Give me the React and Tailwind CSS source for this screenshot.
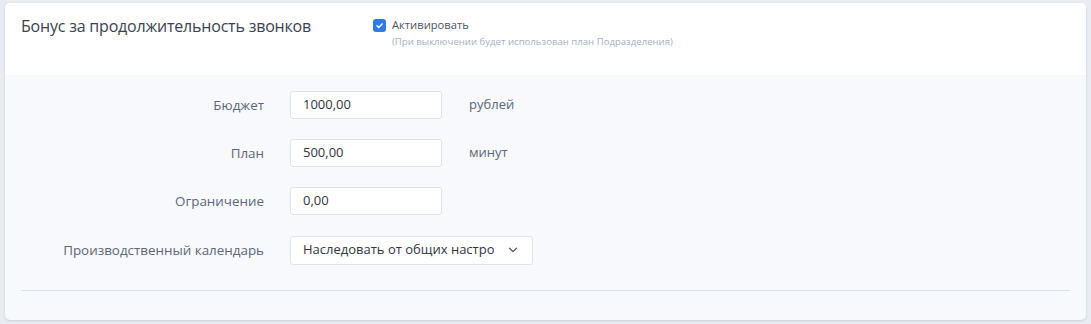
import React from "react";

function Row({ label, children, suffix }) {
  return (
    <div className="flex items-center h-[28px]">
      <div className="w-[243px] text-right text-[13.4px] text-[#5c6778] whitespace-nowrap">{label}</div>
      <div className="ml-[26px]">{children}</div>
      {suffix && <div className="ml-[27px] text-[13px] text-[#5c6778]">{suffix}</div>}
    </div>
  );
}

function Input({ value }) {
  return (
    <div className="w-[152px] h-[28px] bg-white border border-[#dde3eb] rounded-[3px] flex items-center pl-[12px] text-[13px] text-[#2f3542]">
      {value}
    </div>
  );
}

export default function App() {
  return (
    <div className="w-[1091px] h-[324px] bg-[#e9edf3] pt-[3px] pl-[5px] font-['Open_Sans','Noto_Sans',sans-serif]">
      <div className="w-[1081px] h-[317px] rounded-[5px] overflow-hidden shadow-[0_1px_3px_rgba(60,70,90,0.18)] bg-[#f7f9fc] flex flex-col">
        <div className="h-[72px] bg-white flex pl-[16px] pt-[11px]">
          <div className="w-[352px] text-[16px] leading-[24px] tracking-[-0.2px] text-[#3b4250]">Бонус за продолжительность звонков</div>
          <div className="flex flex-col">
            <div className="flex items-center h-[20px] mt-[1px]">
              <div className="w-[13px] h-[13px] rounded-[3px] bg-[#2e7be4] flex items-center justify-center">
                <svg width="9" height="9" viewBox="0 0 10 10">
                  <path d="M2.2 5.2 L4.2 7.1 L7.9 3.2" stroke="white" strokeWidth="1.6" fill="none" strokeLinecap="round" strokeLinejoin="round" />
                </svg>
              </div>
              <span className="ml-[6px] text-[11.2px] text-[#4d5666]">Активировать</span>
            </div>
            <div className="ml-[19px] text-[9.6px] leading-[14px] text-[#a4b0c2]">(При выключении будет использован план Подразделения)</div>
          </div>
        </div>
        <div className="flex-1 px-[16px] pt-[16px]">
          <div className="flex flex-col gap-[20px]">
            <Row label="Бюджет" suffix="рублей"><Input value="1000,00" /></Row>
            <Row label="План" suffix="минут"><Input value="500,00" /></Row>
            <Row label="Ограничение"><Input value="0,00" /></Row>
            <div className="mt-[1px]">
              <Row label="Производственный календарь">
                <div className="w-[243px] h-[29px] bg-white border border-[#dde3eb] rounded-[3px] flex items-center pl-[12px] pr-[14px] text-[13px] text-[#2f3542]">
                  <span className="w-[191px] overflow-hidden whitespace-nowrap">Наследовать от общих настроек</span>
                  <svg className="ml-auto" width="10" height="6" viewBox="0 0 10 6">
                    <path d="M1.5 1.2 L5 4.6 L8.5 1.2" stroke="#4d5666" strokeWidth="1.2" fill="none" strokeLinecap="round" strokeLinejoin="round" />
                  </svg>
                </div>
              </Row>
            </div>
          </div>
          <div className="mt-[26px] w-[1049px] border-t border-[#d8e0ea]" />
        </div>
      </div>
    </div>
  );
}
